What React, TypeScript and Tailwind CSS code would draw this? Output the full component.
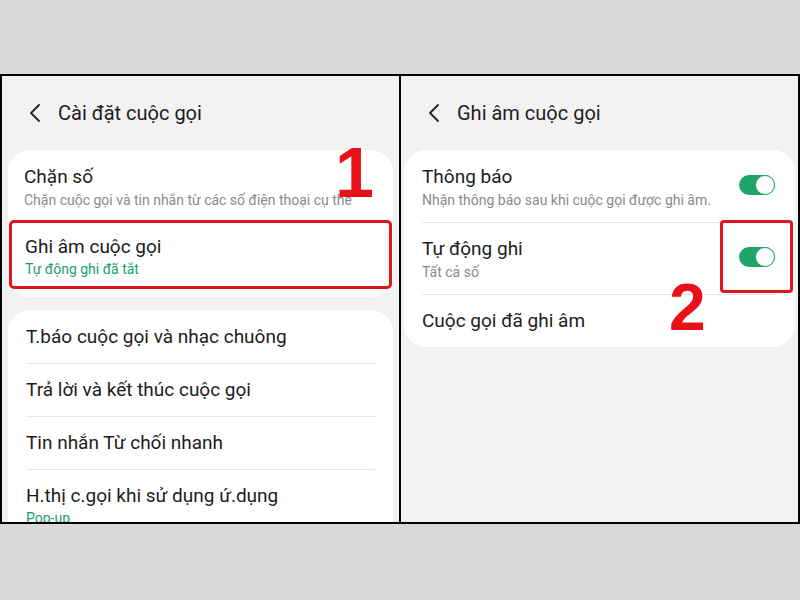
import React from "react";

const font = { fontFamily: "Roboto, 'Noto Sans', sans-serif" };

function Back() {
  return (
    <svg width="12" height="20" viewBox="0 0 12 20" className="shrink-0">
      <path d="M10 2 L2 10 L10 18" fill="none" stroke="#222" strokeWidth="1.8" strokeLinecap="round" strokeLinejoin="round" />
    </svg>
  );
}

function Toggle() {
  return (
    <div className="relative w-[36px] h-[20px] rounded-full bg-[#1fa56b] shrink-0">
      <div className="absolute right-0 top-0 w-[20px] h-[20px] rounded-full bg-white border-[1.5px] border-[#1fa56b]" />
    </div>
  );
}

function Header({ title }: { title: string }) {
  return (
    <div className="flex items-center h-[74px] shrink-0 pl-[27px] gap-[17px]">
      <Back />
      <span className="text-[20px] text-[#1c1c1c]">{title}</span>
    </div>
  );
}

export default function App() {
  return (
    <div className="w-[800px] h-[600px] bg-[#d9d9d9] flex flex-col" style={font}>
      <div className="h-[74px] shrink-0" />
      <div className="h-[450px] shrink-0 flex border-2 border-black bg-black gap-[2px] overflow-hidden">
        {/* Left panel */}
        <div className="relative w-[397px] h-full bg-[#f2f2f2] flex flex-col overflow-hidden">
          <Header title="Cài đặt cuộc gọi" />
          <div className="mx-[6px] shrink-0 bg-white rounded-[22px] flex flex-col pt-[14px] pb-[8px]">
            <div className="px-[16px] flex flex-col h-[56px]">
              <span className="text-[19px] leading-[26px] text-[#1c1c1c]">Chặn số</span>
              <span className="text-[14px] leading-[20px] text-[#8a8a8a] whitespace-nowrap overflow-hidden w-[335px]">
                Chặn cuộc gọi và tin nhắn từ các số điện thoại cụ thể
              </span>
            </div>
            <div className="mx-[1px] h-[69px] border-[3px] border-[#e0141e] rounded-[5px] px-[13px] pt-[11px] flex flex-col">
              <span className="text-[19px] leading-[26px] text-[#1c1c1c]">Ghi âm cuộc gọi</span>
              <span className="text-[14px] leading-[19px] text-[#1a9e6a]">Tự động ghi đã tắt</span>
            </div>
          </div>
          <div className="mx-[6px] mt-[13px] shrink-0 h-[260px] bg-white rounded-[22px] flex flex-col pt-[14px]">
            <div className="mx-[18px] h-[40px] flex items-start border-b border-[#e6e6e6]">
              <span className="text-[19px] leading-[26px] text-[#1c1c1c]">T.báo cuộc gọi và nhạc chuông</span>
            </div>
            <div className="mx-[18px] h-[53px] flex items-center border-b border-[#e6e6e6]">
              <span className="text-[19px] leading-[26px] text-[#1c1c1c]">Trả lời và kết thúc cuộc gọi</span>
            </div>
            <div className="mx-[18px] h-[53px] flex items-center border-b border-[#e6e6e6]">
              <span className="text-[19px] leading-[26px] text-[#1c1c1c]">Tin nhắn Từ chối nhanh</span>
            </div>
            <div className="mx-[18px] pt-[13px] flex flex-col">
              <span className="text-[19px] leading-[26px] text-[#1c1c1c]">H.thị c.gọi khi sử dụng ứ.dụng</span>
              <span className="text-[14px] leading-[19px] text-[#1a9e6a]">Pop-up</span>
            </div>
          </div>
          <span
            className="absolute left-[333px] top-[62px] text-[70px] leading-none font-bold text-[#e8111a]"
            style={{ fontFamily: "'Liberation Sans', Arial, sans-serif" }}
          >
            1
          </span>
        </div>
        {/* Right panel */}
        <div className="relative flex-1 h-full bg-[#f2f2f2] flex flex-col overflow-hidden">
          <Header title="Ghi âm cuộc gọi" />
          <div className="mx-[3px] shrink-0 bg-white rounded-[22px] flex flex-col pt-[14px]">
            <div className="mx-[18px] h-[59px] flex items-start justify-between border-b border-[#e6e6e6]">
              <div className="flex flex-col">
                <span className="text-[19px] leading-[26px] text-[#1c1c1c]">Thông báo</span>
                <span className="text-[14px] leading-[20px] text-[#8a8a8a]">Nhận thông báo sau khi cuộc gọi được ghi âm.</span>
              </div>
              <div className="mt-[11px] mr-[2px]">
                <Toggle />
              </div>
            </div>
            <div className="relative mx-[18px] h-[72px] flex items-center justify-between border-b border-[#e6e6e6]">
              <div className="flex flex-col">
                <span className="text-[19px] leading-[26px] text-[#1c1c1c]">Tự động ghi</span>
                <span className="text-[14px] leading-[20px] text-[#8a8a8a]">Tất cả số</span>
              </div>
              <div className="mr-[2px] -mt-[4px]">
                <Toggle />
              </div>
              <div className="absolute right-[-16px] top-[-3px] w-[73px] h-[73px] border-[3px] border-[#e0141e] rounded-[4px]" />
            </div>
            <div className="mx-[18px] h-[52px] flex items-center">
              <span className="text-[19px] leading-[26px] text-[#1c1c1c]">Cuộc gọi đã ghi âm</span>
            </div>
          </div>
          <span
            className="absolute left-[268px] top-[198px] text-[66px] leading-none font-bold text-[#e8111a]"
            style={{ fontFamily: "'Liberation Sans', Arial, sans-serif" }}
          >
            2
          </span>
        </div>
      </div>
      <div className="flex-1" />
    </div>
  );
}
